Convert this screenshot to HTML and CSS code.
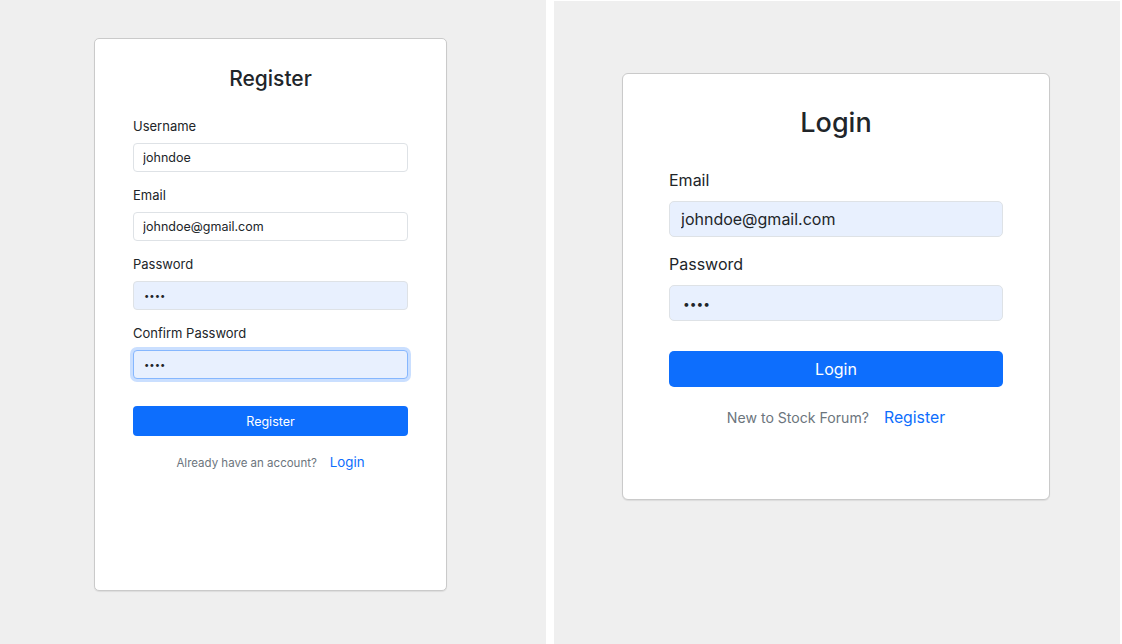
FILE: index.html
```html
<!DOCTYPE html>
<html lang="en">
<head>
<meta charset="utf-8">
<title>Register / Login</title>
<link rel="stylesheet" href="styles.css">
</head>
<body>
<div class="screens">
  <section class="panel panel-left">
    <form class="card card-sm">
      <h2 class="card-title">Register</h2>
      <div class="field">
        <label class="label">Username</label>
        <input class="input" type="text" value="johndoe">
      </div>
      <div class="field">
        <label class="label">Email</label>
        <input class="input" type="text" value="johndoe@gmail.com">
      </div>
      <div class="field">
        <label class="label">Password</label>
        <input class="input autofill secret" type="password" value="abcd">
      </div>
      <div class="field">
        <label class="label">Confirm Password</label>
        <input class="input autofill secret focused" type="password" value="abcd">
      </div>
      <button type="button" class="btn">Register</button>
      <p class="footer"><span class="muted">Already have an account?</span><a class="link" href="#">Login</a></p>
    </form>
  </section>
  <section class="panel panel-right">
    <form class="card card-lg">
      <h2 class="card-title">Login</h2>
      <div class="field">
        <label class="label">Email</label>
        <input class="input autofill" type="text" value="johndoe@gmail.com">
      </div>
      <div class="field">
        <label class="label">Password</label>
        <input class="input autofill secret" type="password" value="abcd">
      </div>
      <button type="button" class="btn">Login</button>
      <p class="footer"><span class="muted">New to Stock Forum?</span><a class="link" href="#">Register</a></p>
    </form>
  </section>
</div>
</body>
</html>
```

FILE: styles.css
```css
* { box-sizing: border-box; }
html, body { margin: 0; padding: 0; background: #ffffff; }
body {
  font-family: Inter, "Noto Sans", "Liberation Sans", sans-serif;
  color: #212529;
  width: 1122px;
  height: 644px;
  overflow: hidden;
}
.screens {
  display: flex;
  gap: 8px;
  height: 644px;
}
.panel {
  background: #efefef;
  display: flex;
  align-items: flex-start;
}
.panel-left {
  width: 546px;
  height: 644px;
  padding: 38px 0 0 94px;
}
.panel-right {
  width: 566px;
  height: 643px;
  margin-top: 1px;
  padding: 72px 0 0 68px;
}
.card {
  background: #fff;
  border: 1.5px solid #cacaca;
  box-shadow: 0 1px 1px rgba(0,0,0,0.08);
  display: flex;
  flex-direction: column;
}
.card-title { margin: 0; font-weight: 500; text-align: center; }
.field { display: flex; flex-direction: column; }
.label { display: block; }
.input {
  display: block;
  width: 100%;
  border: 1px solid #dee2e6;
  background: #fff;
  color: #212529;
  font-family: inherit;
  outline: none;
}
.input.autofill { background: #e8f0fe; }
.input.focused {
  border-color: #86b7fe;
  box-shadow: 0 0 0 3px rgba(13,110,253,0.22);
}
.btn {
  display: block;
  width: 100%;
  border: none;
  background: #0d6efd;
  color: #fff;
  font-family: inherit;
  cursor: pointer;
}
.footer { margin: 0; display: flex; justify-content: center; align-items: baseline; }
.muted { color: #6c757d; }
.link { color: #0d6efd; text-decoration: none; }

/* small (register) card */
.card-sm {
  width: 353px;
  height: 553px;
  border-radius: 5px;
  padding: 27px 38px 0;
}
.card-sm .card-title { font-size: 21px; line-height: 26px; margin-bottom: 25px; }
.card-sm .field { margin-bottom: 14px; }
.card-sm .label { font-size: 13px; line-height: 18px; margin-bottom: 8px; }
.card-sm .input { height: 29px; border-radius: 4px; padding: 0 9px; font-size: 12.5px; }
.card-sm .input.secret { font-size: 9.5px; padding-left: 10px; }
.card-sm .btn { margin-top: 13px; height: 30px; border-radius: 4px; font-size: 12.5px; }
.card-sm .footer { margin-top: 17px; gap: 13px; line-height: 18px; }
.card-sm .muted { font-size: 11.5px; }
.card-sm .link { font-size: 13.3px; }

/* large (login) card */
.card-lg {
  width: 428px;
  height: 427px;
  border-radius: 6px;
  padding: 32px 46px 0;
}
.card-lg .card-title { font-size: 27px; line-height: 34px; margin-bottom: 29px; }
.card-lg .field { margin-bottom: 16px; }
.card-lg .label { font-size: 16px; line-height: 22px; margin-bottom: 10px; }
.card-lg .input { height: 36px; border-radius: 5px; padding: 0 11px; font-size: 16px; }
.card-lg .input.secret { font-size: 12px; padding-left: 13px; }
.card-lg .btn { margin-top: 14px; height: 36px; border-radius: 5px; font-size: 16px; }
.card-lg .footer { margin-top: 20px; gap: 15px; line-height: 22px; }
.card-lg .muted { font-size: 14.1px; }
.card-lg .link { font-size: 15.8px; }
```
